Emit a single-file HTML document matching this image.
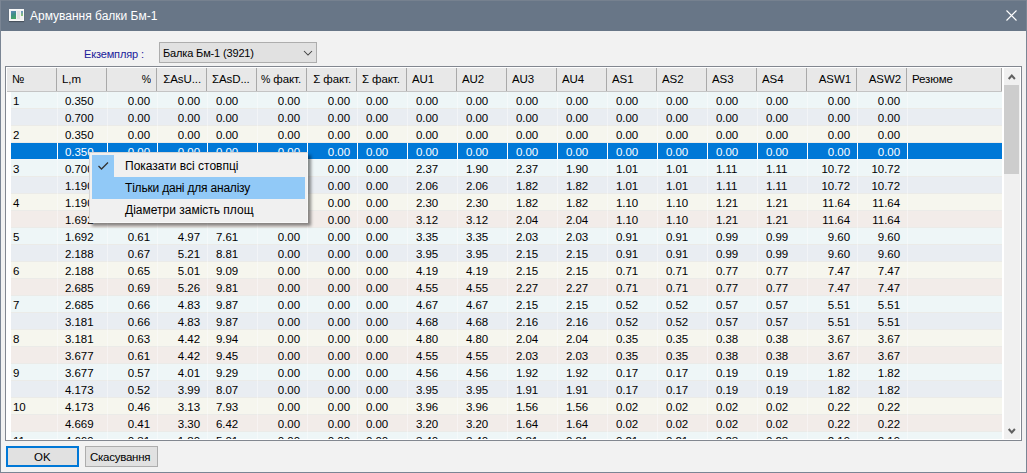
<!DOCTYPE html><html><head><meta charset="utf-8"><style>
*{margin:0;padding:0;box-sizing:border-box}
html,body{width:1027px;height:473px;overflow:hidden;background:#f2f2f2;font-family:"Liberation Sans", sans-serif;}
.a{position:absolute}
.t{position:absolute;white-space:nowrap;font-size:12px;line-height:16px;color:#000}
.d{letter-spacing:-0.05px;font-size:11.5px}.pc{display:inline-block;font-size:10.5px;transform:scaleY(1.12);transform-origin:50% 80%}.h{letter-spacing:-0.1px;font-size:11.5px}
.r{text-align:right}
</style></head><body>
<div class="a" style="left:0;top:0;width:1027px;height:473px;background:#f2f2f2;border:1px solid #717d8d;border-top:none"></div>
<div class="a" style="left:0;top:0;width:1027px;height:31px;background:#687687"></div>
<div class="a" style="left:0;top:0;width:1027px;height:1px;background:#76818f"></div>
<div class="a" style="left:0;top:0;width:1px;height:473px;background:#7a8594"></div>
<div class="a" style="left:1026px;top:0;width:1px;height:473px;background:#7a8594"></div>
<div class="a" style="left:0;top:472px;width:1027px;height:1px;background:#7a8594"></div>
<div class="a" style="left:9px;top:9px;width:15px;height:12px;background:#f2f2f2;border:1px solid #fafafa;box-shadow:0 1px 1px rgba(0,0,0,.3)"></div>
<div class="a" style="left:11px;top:11px;width:5px;height:8px;background:linear-gradient(160deg,#6088bb,#3f8f86 45%,#45a95a)"></div>
<div class="a" style="left:17px;top:11px;width:3px;height:8px;background:#e2e2e2"></div>
<div class="a" style="left:21px;top:11px;width:2px;height:5px;background:linear-gradient(#6a94c8,#8cc870)"></div>
<div class="t" style="left:30px;top:8px;color:#fff;font-size:12px">Армування балки Бм-1</div>
<svg class="a" style="left:1001px;top:5px" width="20" height="20" viewBox="0 0 20 20"><path d="M5.5 5.5L15.5 15.5M15.5 5.5L5.5 15.5" stroke="#fff" stroke-width="1.1"/></svg>
<div class="t" style="left:84px;top:46px;color:#20209a;font-size:11px;letter-spacing:-0.15px">Екземпляр :</div>
<div class="a" style="left:159px;top:42px;width:158px;height:21px;background:#e1e1e1;border:1px solid #adadad"></div>
<div class="t" style="left:163px;top:45px;font-size:11px;letter-spacing:-0.15px">Балка Бм-1 (3921)</div>
<svg class="a" style="left:302px;top:48px" width="12" height="10" viewBox="0 0 12 10"><path d="M2 3L6 7L10 3" fill="none" stroke="#404040" stroke-width="1.05"/></svg>
<div class="a" style="left:5px;top:66px;width:1017px;height:375px;background:#fff;border:1px solid #828790"></div>
<div class="a" style="left:7px;top:68px;width:995px;height:23px;background:#e8e8e8"></div>
<div class="a" style="left:7px;top:91px;width:995px;height:1px;background:#c4c4c4"></div>
<div class="a" style="left:56px;top:68px;width:1px;height:23px;background:#a9a9a9"></div>
<div class="t h" style="left:12px;top:71px">№</div>
<div class="a" style="left:106px;top:68px;width:1px;height:23px;background:#a9a9a9"></div>
<div class="t h" style="left:62px;top:71px">L,m</div>
<div class="a" style="left:156px;top:68px;width:1px;height:23px;background:#a9a9a9"></div>
<div class="t r h" style="left:106px;top:71px;width:45px"><span class="pc">%</span></div>
<div class="a" style="left:206px;top:68px;width:1px;height:23px;background:#a9a9a9"></div>
<div class="t r h" style="left:156px;top:71px;width:45px">ΣAsU...</div>
<div class="a" style="left:256px;top:68px;width:1px;height:23px;background:#a9a9a9"></div>
<div class="t h" style="left:212px;top:71px">ΣAsD...</div>
<div class="a" style="left:306px;top:68px;width:1px;height:23px;background:#a9a9a9"></div>
<div class="t r h" style="left:256px;top:71px;width:45px"><span class="pc">%</span> факт.</div>
<div class="a" style="left:356px;top:68px;width:1px;height:23px;background:#a9a9a9"></div>
<div class="t r h" style="left:306px;top:71px;width:45px">Σ факт.</div>
<div class="a" style="left:406px;top:68px;width:1px;height:23px;background:#a9a9a9"></div>
<div class="t h" style="left:362px;top:71px">Σ факт.</div>
<div class="a" style="left:456px;top:68px;width:1px;height:23px;background:#a9a9a9"></div>
<div class="t h" style="left:412px;top:71px">AU1</div>
<div class="a" style="left:506px;top:68px;width:1px;height:23px;background:#a9a9a9"></div>
<div class="t h" style="left:462px;top:71px">AU2</div>
<div class="a" style="left:556px;top:68px;width:1px;height:23px;background:#a9a9a9"></div>
<div class="t h" style="left:512px;top:71px">AU3</div>
<div class="a" style="left:606px;top:68px;width:1px;height:23px;background:#a9a9a9"></div>
<div class="t h" style="left:562px;top:71px">AU4</div>
<div class="a" style="left:656px;top:68px;width:1px;height:23px;background:#a9a9a9"></div>
<div class="t h" style="left:612px;top:71px">AS1</div>
<div class="a" style="left:706px;top:68px;width:1px;height:23px;background:#a9a9a9"></div>
<div class="t h" style="left:662px;top:71px">AS2</div>
<div class="a" style="left:756px;top:68px;width:1px;height:23px;background:#a9a9a9"></div>
<div class="t h" style="left:712px;top:71px">AS3</div>
<div class="a" style="left:806px;top:68px;width:1px;height:23px;background:#a9a9a9"></div>
<div class="t h" style="left:762px;top:71px">AS4</div>
<div class="a" style="left:856px;top:68px;width:1px;height:23px;background:#a9a9a9"></div>
<div class="t r h" style="left:806px;top:71px;width:45px">ASW1</div>
<div class="a" style="left:906px;top:68px;width:1px;height:23px;background:#a9a9a9"></div>
<div class="t r h" style="left:856px;top:71px;width:45px">ASW2</div>
<div class="t h" style="left:912px;top:71px">Резюме</div>
<div class="a" style="left:1001px;top:68px;width:1px;height:23px;background:#a9a9a9"></div>
<div class="a" style="left:7px;top:92px;width:997px;height:347px;overflow:hidden;background:#fff">
<div class="a" style="left:4px;top:0px;width:991px;height:17px;background:#eef6f7"></div>
<div class="a" style="left:4px;top:16px;width:991px;height:1px;background:#ebebe8"></div>
<div class="a" style="left:4px;top:17px;width:991px;height:17px;background:#e9edf2"></div>
<div class="a" style="left:4px;top:33px;width:991px;height:1px;background:#ebebe8"></div>
<div class="a" style="left:4px;top:34px;width:991px;height:17px;background:#f6f6ee"></div>
<div class="a" style="left:4px;top:50px;width:991px;height:1px;background:#ebebe8"></div>
<div class="a" style="left:4px;top:51px;width:991px;height:17px;background:#0078d7"></div>
<div class="a" style="left:4px;top:67px;width:991px;height:1px;background:#f4f6f8"></div>
<div class="a" style="left:4px;top:68px;width:991px;height:17px;background:#eef6f7"></div>
<div class="a" style="left:4px;top:84px;width:991px;height:1px;background:#ebebe8"></div>
<div class="a" style="left:4px;top:85px;width:991px;height:17px;background:#e9edf2"></div>
<div class="a" style="left:4px;top:101px;width:991px;height:1px;background:#ebebe8"></div>
<div class="a" style="left:4px;top:102px;width:991px;height:17px;background:#f6f6ee"></div>
<div class="a" style="left:4px;top:118px;width:991px;height:1px;background:#ebebe8"></div>
<div class="a" style="left:4px;top:119px;width:991px;height:17px;background:#f2ece9"></div>
<div class="a" style="left:4px;top:135px;width:991px;height:1px;background:#ebebe8"></div>
<div class="a" style="left:4px;top:136px;width:991px;height:17px;background:#eef6f7"></div>
<div class="a" style="left:4px;top:152px;width:991px;height:1px;background:#ebebe8"></div>
<div class="a" style="left:4px;top:153px;width:991px;height:17px;background:#e9edf2"></div>
<div class="a" style="left:4px;top:169px;width:991px;height:1px;background:#ebebe8"></div>
<div class="a" style="left:4px;top:170px;width:991px;height:17px;background:#f6f6ee"></div>
<div class="a" style="left:4px;top:186px;width:991px;height:1px;background:#ebebe8"></div>
<div class="a" style="left:4px;top:187px;width:991px;height:17px;background:#f2ece9"></div>
<div class="a" style="left:4px;top:203px;width:991px;height:1px;background:#ebebe8"></div>
<div class="a" style="left:4px;top:204px;width:991px;height:17px;background:#eef6f7"></div>
<div class="a" style="left:4px;top:220px;width:991px;height:1px;background:#ebebe8"></div>
<div class="a" style="left:4px;top:221px;width:991px;height:17px;background:#e9edf2"></div>
<div class="a" style="left:4px;top:237px;width:991px;height:1px;background:#ebebe8"></div>
<div class="a" style="left:4px;top:238px;width:991px;height:17px;background:#f6f6ee"></div>
<div class="a" style="left:4px;top:254px;width:991px;height:1px;background:#ebebe8"></div>
<div class="a" style="left:4px;top:255px;width:991px;height:17px;background:#f2ece9"></div>
<div class="a" style="left:4px;top:271px;width:991px;height:1px;background:#ebebe8"></div>
<div class="a" style="left:4px;top:272px;width:991px;height:17px;background:#eef6f7"></div>
<div class="a" style="left:4px;top:288px;width:991px;height:1px;background:#ebebe8"></div>
<div class="a" style="left:4px;top:289px;width:991px;height:17px;background:#e9edf2"></div>
<div class="a" style="left:4px;top:305px;width:991px;height:1px;background:#ebebe8"></div>
<div class="a" style="left:4px;top:306px;width:991px;height:17px;background:#f6f6ee"></div>
<div class="a" style="left:4px;top:322px;width:991px;height:1px;background:#ebebe8"></div>
<div class="a" style="left:4px;top:323px;width:991px;height:17px;background:#f2ece9"></div>
<div class="a" style="left:4px;top:339px;width:991px;height:1px;background:#ebebe8"></div>
<div class="a" style="left:4px;top:340px;width:991px;height:17px;background:#eef6f7"></div>
<div class="a" style="left:4px;top:356px;width:991px;height:1px;background:#ebebe8"></div>
<div class="a" style="left:50px;top:0;width:1px;height:347px;background:rgba(255,255,255,.4)"></div>
<div class="a" style="left:100px;top:0;width:1px;height:347px;background:rgba(255,255,255,.4)"></div>
<div class="a" style="left:150px;top:0;width:1px;height:347px;background:rgba(255,255,255,.4)"></div>
<div class="a" style="left:200px;top:0;width:1px;height:347px;background:rgba(255,255,255,.4)"></div>
<div class="a" style="left:250px;top:0;width:1px;height:347px;background:rgba(255,255,255,.4)"></div>
<div class="a" style="left:300px;top:0;width:1px;height:347px;background:rgba(255,255,255,.4)"></div>
<div class="a" style="left:350px;top:0;width:1px;height:347px;background:rgba(255,255,255,.4)"></div>
<div class="a" style="left:400px;top:0;width:1px;height:347px;background:rgba(255,255,255,.4)"></div>
<div class="a" style="left:450px;top:0;width:1px;height:347px;background:rgba(255,255,255,.4)"></div>
<div class="a" style="left:500px;top:0;width:1px;height:347px;background:rgba(255,255,255,.4)"></div>
<div class="a" style="left:550px;top:0;width:1px;height:347px;background:rgba(255,255,255,.4)"></div>
<div class="a" style="left:600px;top:0;width:1px;height:347px;background:rgba(255,255,255,.4)"></div>
<div class="a" style="left:650px;top:0;width:1px;height:347px;background:rgba(255,255,255,.4)"></div>
<div class="a" style="left:700px;top:0;width:1px;height:347px;background:rgba(255,255,255,.4)"></div>
<div class="a" style="left:750px;top:0;width:1px;height:347px;background:rgba(255,255,255,.4)"></div>
<div class="a" style="left:800px;top:0;width:1px;height:347px;background:rgba(255,255,255,.4)"></div>
<div class="a" style="left:850px;top:0;width:1px;height:347px;background:rgba(255,255,255,.4)"></div>
<div class="a" style="left:900px;top:0;width:1px;height:347px;background:rgba(255,255,255,.4)"></div>
<div class="a" style="left:50px;top:51px;width:1px;height:16px;background:#fff"></div>
<div class="a" style="left:100px;top:51px;width:1px;height:16px;background:#fff"></div>
<div class="a" style="left:150px;top:51px;width:1px;height:16px;background:#fff"></div>
<div class="a" style="left:200px;top:51px;width:1px;height:16px;background:#fff"></div>
<div class="a" style="left:250px;top:51px;width:1px;height:16px;background:#fff"></div>
<div class="a" style="left:300px;top:51px;width:1px;height:16px;background:#fff"></div>
<div class="a" style="left:350px;top:51px;width:1px;height:16px;background:#fff"></div>
<div class="a" style="left:400px;top:51px;width:1px;height:16px;background:#fff"></div>
<div class="a" style="left:450px;top:51px;width:1px;height:16px;background:#fff"></div>
<div class="a" style="left:500px;top:51px;width:1px;height:16px;background:#fff"></div>
<div class="a" style="left:550px;top:51px;width:1px;height:16px;background:#fff"></div>
<div class="a" style="left:600px;top:51px;width:1px;height:16px;background:#fff"></div>
<div class="a" style="left:650px;top:51px;width:1px;height:16px;background:#fff"></div>
<div class="a" style="left:700px;top:51px;width:1px;height:16px;background:#fff"></div>
<div class="a" style="left:750px;top:51px;width:1px;height:16px;background:#fff"></div>
<div class="a" style="left:800px;top:51px;width:1px;height:16px;background:#fff"></div>
<div class="a" style="left:850px;top:51px;width:1px;height:16px;background:#fff"></div>
<div class="a" style="left:900px;top:51px;width:1px;height:16px;background:#fff"></div>
<div class="t d" style="left:6px;top:1px;color:#000">1</div>
<div class="t d" style="left:58px;top:1px;color:#000">0.350</div>
<div class="t r d" style="left:99px;top:1px;width:44px;color:#000">0.00</div>
<div class="t r d" style="left:149px;top:1px;width:44px;color:#000">0.00</div>
<div class="t d" style="left:209px;top:1px;color:#000">0.00</div>
<div class="t r d" style="left:249px;top:1px;width:44px;color:#000">0.00</div>
<div class="t r d" style="left:299px;top:1px;width:44px;color:#000">0.00</div>
<div class="t d" style="left:359px;top:1px;color:#000">0.00</div>
<div class="t d" style="left:409px;top:1px;color:#000">0.00</div>
<div class="t d" style="left:459px;top:1px;color:#000">0.00</div>
<div class="t d" style="left:509px;top:1px;color:#000">0.00</div>
<div class="t d" style="left:559px;top:1px;color:#000">0.00</div>
<div class="t d" style="left:609px;top:1px;color:#000">0.00</div>
<div class="t d" style="left:659px;top:1px;color:#000">0.00</div>
<div class="t d" style="left:709px;top:1px;color:#000">0.00</div>
<div class="t d" style="left:759px;top:1px;color:#000">0.00</div>
<div class="t r d" style="left:799px;top:1px;width:44px;color:#000">0.00</div>
<div class="t r d" style="left:849px;top:1px;width:44px;color:#000">0.00</div>
<div class="t d" style="left:58px;top:18px;color:#000">0.700</div>
<div class="t r d" style="left:99px;top:18px;width:44px;color:#000">0.00</div>
<div class="t r d" style="left:149px;top:18px;width:44px;color:#000">0.00</div>
<div class="t d" style="left:209px;top:18px;color:#000">0.00</div>
<div class="t r d" style="left:249px;top:18px;width:44px;color:#000">0.00</div>
<div class="t r d" style="left:299px;top:18px;width:44px;color:#000">0.00</div>
<div class="t d" style="left:359px;top:18px;color:#000">0.00</div>
<div class="t d" style="left:409px;top:18px;color:#000">0.00</div>
<div class="t d" style="left:459px;top:18px;color:#000">0.00</div>
<div class="t d" style="left:509px;top:18px;color:#000">0.00</div>
<div class="t d" style="left:559px;top:18px;color:#000">0.00</div>
<div class="t d" style="left:609px;top:18px;color:#000">0.00</div>
<div class="t d" style="left:659px;top:18px;color:#000">0.00</div>
<div class="t d" style="left:709px;top:18px;color:#000">0.00</div>
<div class="t d" style="left:759px;top:18px;color:#000">0.00</div>
<div class="t r d" style="left:799px;top:18px;width:44px;color:#000">0.00</div>
<div class="t r d" style="left:849px;top:18px;width:44px;color:#000">0.00</div>
<div class="t d" style="left:6px;top:35px;color:#000">2</div>
<div class="t d" style="left:58px;top:35px;color:#000">0.350</div>
<div class="t r d" style="left:99px;top:35px;width:44px;color:#000">0.00</div>
<div class="t r d" style="left:149px;top:35px;width:44px;color:#000">0.00</div>
<div class="t d" style="left:209px;top:35px;color:#000">0.00</div>
<div class="t r d" style="left:249px;top:35px;width:44px;color:#000">0.00</div>
<div class="t r d" style="left:299px;top:35px;width:44px;color:#000">0.00</div>
<div class="t d" style="left:359px;top:35px;color:#000">0.00</div>
<div class="t d" style="left:409px;top:35px;color:#000">0.00</div>
<div class="t d" style="left:459px;top:35px;color:#000">0.00</div>
<div class="t d" style="left:509px;top:35px;color:#000">0.00</div>
<div class="t d" style="left:559px;top:35px;color:#000">0.00</div>
<div class="t d" style="left:609px;top:35px;color:#000">0.00</div>
<div class="t d" style="left:659px;top:35px;color:#000">0.00</div>
<div class="t d" style="left:709px;top:35px;color:#000">0.00</div>
<div class="t d" style="left:759px;top:35px;color:#000">0.00</div>
<div class="t r d" style="left:799px;top:35px;width:44px;color:#000">0.00</div>
<div class="t r d" style="left:849px;top:35px;width:44px;color:#000">0.00</div>
<div class="t d" style="left:58px;top:52px;color:#fff">0.350</div>
<div class="t r d" style="left:99px;top:52px;width:44px;color:#fff">0.00</div>
<div class="t r d" style="left:149px;top:52px;width:44px;color:#fff">0.00</div>
<div class="t d" style="left:209px;top:52px;color:#fff">0.00</div>
<div class="t r d" style="left:249px;top:52px;width:44px;color:#fff">0.00</div>
<div class="t r d" style="left:299px;top:52px;width:44px;color:#fff">0.00</div>
<div class="t d" style="left:359px;top:52px;color:#fff">0.00</div>
<div class="t d" style="left:409px;top:52px;color:#fff">0.00</div>
<div class="t d" style="left:459px;top:52px;color:#fff">0.00</div>
<div class="t d" style="left:509px;top:52px;color:#fff">0.00</div>
<div class="t d" style="left:559px;top:52px;color:#fff">0.00</div>
<div class="t d" style="left:609px;top:52px;color:#fff">0.00</div>
<div class="t d" style="left:659px;top:52px;color:#fff">0.00</div>
<div class="t d" style="left:709px;top:52px;color:#fff">0.00</div>
<div class="t d" style="left:759px;top:52px;color:#fff">0.00</div>
<div class="t r d" style="left:799px;top:52px;width:44px;color:#fff">0.00</div>
<div class="t r d" style="left:849px;top:52px;width:44px;color:#fff">0.00</div>
<div class="t d" style="left:6px;top:69px;color:#000">3</div>
<div class="t d" style="left:58px;top:69px;color:#000">0.700</div>
<div class="t r d" style="left:299px;top:69px;width:44px;color:#000">0.00</div>
<div class="t d" style="left:359px;top:69px;color:#000">0.00</div>
<div class="t d" style="left:409px;top:69px;color:#000">2.37</div>
<div class="t d" style="left:459px;top:69px;color:#000">1.90</div>
<div class="t d" style="left:509px;top:69px;color:#000">2.37</div>
<div class="t d" style="left:559px;top:69px;color:#000">1.90</div>
<div class="t d" style="left:609px;top:69px;color:#000">1.01</div>
<div class="t d" style="left:659px;top:69px;color:#000">1.01</div>
<div class="t d" style="left:709px;top:69px;color:#000">1.11</div>
<div class="t d" style="left:759px;top:69px;color:#000">1.11</div>
<div class="t r d" style="left:799px;top:69px;width:44px;color:#000">10.72</div>
<div class="t r d" style="left:849px;top:69px;width:44px;color:#000">10.72</div>
<div class="t d" style="left:58px;top:86px;color:#000">1.190</div>
<div class="t r d" style="left:299px;top:86px;width:44px;color:#000">0.00</div>
<div class="t d" style="left:359px;top:86px;color:#000">0.00</div>
<div class="t d" style="left:409px;top:86px;color:#000">2.06</div>
<div class="t d" style="left:459px;top:86px;color:#000">2.06</div>
<div class="t d" style="left:509px;top:86px;color:#000">1.82</div>
<div class="t d" style="left:559px;top:86px;color:#000">1.82</div>
<div class="t d" style="left:609px;top:86px;color:#000">1.01</div>
<div class="t d" style="left:659px;top:86px;color:#000">1.01</div>
<div class="t d" style="left:709px;top:86px;color:#000">1.11</div>
<div class="t d" style="left:759px;top:86px;color:#000">1.11</div>
<div class="t r d" style="left:799px;top:86px;width:44px;color:#000">10.72</div>
<div class="t r d" style="left:849px;top:86px;width:44px;color:#000">10.72</div>
<div class="t d" style="left:6px;top:103px;color:#000">4</div>
<div class="t d" style="left:58px;top:103px;color:#000">1.190</div>
<div class="t r d" style="left:299px;top:103px;width:44px;color:#000">0.00</div>
<div class="t d" style="left:359px;top:103px;color:#000">0.00</div>
<div class="t d" style="left:409px;top:103px;color:#000">2.30</div>
<div class="t d" style="left:459px;top:103px;color:#000">2.30</div>
<div class="t d" style="left:509px;top:103px;color:#000">1.82</div>
<div class="t d" style="left:559px;top:103px;color:#000">1.82</div>
<div class="t d" style="left:609px;top:103px;color:#000">1.10</div>
<div class="t d" style="left:659px;top:103px;color:#000">1.10</div>
<div class="t d" style="left:709px;top:103px;color:#000">1.21</div>
<div class="t d" style="left:759px;top:103px;color:#000">1.21</div>
<div class="t r d" style="left:799px;top:103px;width:44px;color:#000">11.64</div>
<div class="t r d" style="left:849px;top:103px;width:44px;color:#000">11.64</div>
<div class="t d" style="left:58px;top:120px;color:#000">1.692</div>
<div class="t r d" style="left:299px;top:120px;width:44px;color:#000">0.00</div>
<div class="t d" style="left:359px;top:120px;color:#000">0.00</div>
<div class="t d" style="left:409px;top:120px;color:#000">3.12</div>
<div class="t d" style="left:459px;top:120px;color:#000">3.12</div>
<div class="t d" style="left:509px;top:120px;color:#000">2.04</div>
<div class="t d" style="left:559px;top:120px;color:#000">2.04</div>
<div class="t d" style="left:609px;top:120px;color:#000">1.10</div>
<div class="t d" style="left:659px;top:120px;color:#000">1.10</div>
<div class="t d" style="left:709px;top:120px;color:#000">1.21</div>
<div class="t d" style="left:759px;top:120px;color:#000">1.21</div>
<div class="t r d" style="left:799px;top:120px;width:44px;color:#000">11.64</div>
<div class="t r d" style="left:849px;top:120px;width:44px;color:#000">11.64</div>
<div class="t d" style="left:6px;top:137px;color:#000">5</div>
<div class="t d" style="left:58px;top:137px;color:#000">1.692</div>
<div class="t r d" style="left:99px;top:137px;width:44px;color:#000">0.61</div>
<div class="t r d" style="left:149px;top:137px;width:44px;color:#000">4.97</div>
<div class="t d" style="left:209px;top:137px;color:#000">7.61</div>
<div class="t r d" style="left:249px;top:137px;width:44px;color:#000">0.00</div>
<div class="t r d" style="left:299px;top:137px;width:44px;color:#000">0.00</div>
<div class="t d" style="left:359px;top:137px;color:#000">0.00</div>
<div class="t d" style="left:409px;top:137px;color:#000">3.35</div>
<div class="t d" style="left:459px;top:137px;color:#000">3.35</div>
<div class="t d" style="left:509px;top:137px;color:#000">2.03</div>
<div class="t d" style="left:559px;top:137px;color:#000">2.03</div>
<div class="t d" style="left:609px;top:137px;color:#000">0.91</div>
<div class="t d" style="left:659px;top:137px;color:#000">0.91</div>
<div class="t d" style="left:709px;top:137px;color:#000">0.99</div>
<div class="t d" style="left:759px;top:137px;color:#000">0.99</div>
<div class="t r d" style="left:799px;top:137px;width:44px;color:#000">9.60</div>
<div class="t r d" style="left:849px;top:137px;width:44px;color:#000">9.60</div>
<div class="t d" style="left:58px;top:154px;color:#000">2.188</div>
<div class="t r d" style="left:99px;top:154px;width:44px;color:#000">0.67</div>
<div class="t r d" style="left:149px;top:154px;width:44px;color:#000">5.21</div>
<div class="t d" style="left:209px;top:154px;color:#000">8.81</div>
<div class="t r d" style="left:249px;top:154px;width:44px;color:#000">0.00</div>
<div class="t r d" style="left:299px;top:154px;width:44px;color:#000">0.00</div>
<div class="t d" style="left:359px;top:154px;color:#000">0.00</div>
<div class="t d" style="left:409px;top:154px;color:#000">3.95</div>
<div class="t d" style="left:459px;top:154px;color:#000">3.95</div>
<div class="t d" style="left:509px;top:154px;color:#000">2.15</div>
<div class="t d" style="left:559px;top:154px;color:#000">2.15</div>
<div class="t d" style="left:609px;top:154px;color:#000">0.91</div>
<div class="t d" style="left:659px;top:154px;color:#000">0.91</div>
<div class="t d" style="left:709px;top:154px;color:#000">0.99</div>
<div class="t d" style="left:759px;top:154px;color:#000">0.99</div>
<div class="t r d" style="left:799px;top:154px;width:44px;color:#000">9.60</div>
<div class="t r d" style="left:849px;top:154px;width:44px;color:#000">9.60</div>
<div class="t d" style="left:6px;top:171px;color:#000">6</div>
<div class="t d" style="left:58px;top:171px;color:#000">2.188</div>
<div class="t r d" style="left:99px;top:171px;width:44px;color:#000">0.65</div>
<div class="t r d" style="left:149px;top:171px;width:44px;color:#000">5.01</div>
<div class="t d" style="left:209px;top:171px;color:#000">9.09</div>
<div class="t r d" style="left:249px;top:171px;width:44px;color:#000">0.00</div>
<div class="t r d" style="left:299px;top:171px;width:44px;color:#000">0.00</div>
<div class="t d" style="left:359px;top:171px;color:#000">0.00</div>
<div class="t d" style="left:409px;top:171px;color:#000">4.19</div>
<div class="t d" style="left:459px;top:171px;color:#000">4.19</div>
<div class="t d" style="left:509px;top:171px;color:#000">2.15</div>
<div class="t d" style="left:559px;top:171px;color:#000">2.15</div>
<div class="t d" style="left:609px;top:171px;color:#000">0.71</div>
<div class="t d" style="left:659px;top:171px;color:#000">0.71</div>
<div class="t d" style="left:709px;top:171px;color:#000">0.77</div>
<div class="t d" style="left:759px;top:171px;color:#000">0.77</div>
<div class="t r d" style="left:799px;top:171px;width:44px;color:#000">7.47</div>
<div class="t r d" style="left:849px;top:171px;width:44px;color:#000">7.47</div>
<div class="t d" style="left:58px;top:188px;color:#000">2.685</div>
<div class="t r d" style="left:99px;top:188px;width:44px;color:#000">0.69</div>
<div class="t r d" style="left:149px;top:188px;width:44px;color:#000">5.26</div>
<div class="t d" style="left:209px;top:188px;color:#000">9.81</div>
<div class="t r d" style="left:249px;top:188px;width:44px;color:#000">0.00</div>
<div class="t r d" style="left:299px;top:188px;width:44px;color:#000">0.00</div>
<div class="t d" style="left:359px;top:188px;color:#000">0.00</div>
<div class="t d" style="left:409px;top:188px;color:#000">4.55</div>
<div class="t d" style="left:459px;top:188px;color:#000">4.55</div>
<div class="t d" style="left:509px;top:188px;color:#000">2.27</div>
<div class="t d" style="left:559px;top:188px;color:#000">2.27</div>
<div class="t d" style="left:609px;top:188px;color:#000">0.71</div>
<div class="t d" style="left:659px;top:188px;color:#000">0.71</div>
<div class="t d" style="left:709px;top:188px;color:#000">0.77</div>
<div class="t d" style="left:759px;top:188px;color:#000">0.77</div>
<div class="t r d" style="left:799px;top:188px;width:44px;color:#000">7.47</div>
<div class="t r d" style="left:849px;top:188px;width:44px;color:#000">7.47</div>
<div class="t d" style="left:6px;top:205px;color:#000">7</div>
<div class="t d" style="left:58px;top:205px;color:#000">2.685</div>
<div class="t r d" style="left:99px;top:205px;width:44px;color:#000">0.66</div>
<div class="t r d" style="left:149px;top:205px;width:44px;color:#000">4.83</div>
<div class="t d" style="left:209px;top:205px;color:#000">9.87</div>
<div class="t r d" style="left:249px;top:205px;width:44px;color:#000">0.00</div>
<div class="t r d" style="left:299px;top:205px;width:44px;color:#000">0.00</div>
<div class="t d" style="left:359px;top:205px;color:#000">0.00</div>
<div class="t d" style="left:409px;top:205px;color:#000">4.67</div>
<div class="t d" style="left:459px;top:205px;color:#000">4.67</div>
<div class="t d" style="left:509px;top:205px;color:#000">2.15</div>
<div class="t d" style="left:559px;top:205px;color:#000">2.15</div>
<div class="t d" style="left:609px;top:205px;color:#000">0.52</div>
<div class="t d" style="left:659px;top:205px;color:#000">0.52</div>
<div class="t d" style="left:709px;top:205px;color:#000">0.57</div>
<div class="t d" style="left:759px;top:205px;color:#000">0.57</div>
<div class="t r d" style="left:799px;top:205px;width:44px;color:#000">5.51</div>
<div class="t r d" style="left:849px;top:205px;width:44px;color:#000">5.51</div>
<div class="t d" style="left:58px;top:222px;color:#000">3.181</div>
<div class="t r d" style="left:99px;top:222px;width:44px;color:#000">0.66</div>
<div class="t r d" style="left:149px;top:222px;width:44px;color:#000">4.83</div>
<div class="t d" style="left:209px;top:222px;color:#000">9.87</div>
<div class="t r d" style="left:249px;top:222px;width:44px;color:#000">0.00</div>
<div class="t r d" style="left:299px;top:222px;width:44px;color:#000">0.00</div>
<div class="t d" style="left:359px;top:222px;color:#000">0.00</div>
<div class="t d" style="left:409px;top:222px;color:#000">4.68</div>
<div class="t d" style="left:459px;top:222px;color:#000">4.68</div>
<div class="t d" style="left:509px;top:222px;color:#000">2.16</div>
<div class="t d" style="left:559px;top:222px;color:#000">2.16</div>
<div class="t d" style="left:609px;top:222px;color:#000">0.52</div>
<div class="t d" style="left:659px;top:222px;color:#000">0.52</div>
<div class="t d" style="left:709px;top:222px;color:#000">0.57</div>
<div class="t d" style="left:759px;top:222px;color:#000">0.57</div>
<div class="t r d" style="left:799px;top:222px;width:44px;color:#000">5.51</div>
<div class="t r d" style="left:849px;top:222px;width:44px;color:#000">5.51</div>
<div class="t d" style="left:6px;top:239px;color:#000">8</div>
<div class="t d" style="left:58px;top:239px;color:#000">3.181</div>
<div class="t r d" style="left:99px;top:239px;width:44px;color:#000">0.63</div>
<div class="t r d" style="left:149px;top:239px;width:44px;color:#000">4.42</div>
<div class="t d" style="left:209px;top:239px;color:#000">9.94</div>
<div class="t r d" style="left:249px;top:239px;width:44px;color:#000">0.00</div>
<div class="t r d" style="left:299px;top:239px;width:44px;color:#000">0.00</div>
<div class="t d" style="left:359px;top:239px;color:#000">0.00</div>
<div class="t d" style="left:409px;top:239px;color:#000">4.80</div>
<div class="t d" style="left:459px;top:239px;color:#000">4.80</div>
<div class="t d" style="left:509px;top:239px;color:#000">2.04</div>
<div class="t d" style="left:559px;top:239px;color:#000">2.04</div>
<div class="t d" style="left:609px;top:239px;color:#000">0.35</div>
<div class="t d" style="left:659px;top:239px;color:#000">0.35</div>
<div class="t d" style="left:709px;top:239px;color:#000">0.38</div>
<div class="t d" style="left:759px;top:239px;color:#000">0.38</div>
<div class="t r d" style="left:799px;top:239px;width:44px;color:#000">3.67</div>
<div class="t r d" style="left:849px;top:239px;width:44px;color:#000">3.67</div>
<div class="t d" style="left:58px;top:256px;color:#000">3.677</div>
<div class="t r d" style="left:99px;top:256px;width:44px;color:#000">0.61</div>
<div class="t r d" style="left:149px;top:256px;width:44px;color:#000">4.42</div>
<div class="t d" style="left:209px;top:256px;color:#000">9.45</div>
<div class="t r d" style="left:249px;top:256px;width:44px;color:#000">0.00</div>
<div class="t r d" style="left:299px;top:256px;width:44px;color:#000">0.00</div>
<div class="t d" style="left:359px;top:256px;color:#000">0.00</div>
<div class="t d" style="left:409px;top:256px;color:#000">4.55</div>
<div class="t d" style="left:459px;top:256px;color:#000">4.55</div>
<div class="t d" style="left:509px;top:256px;color:#000">2.03</div>
<div class="t d" style="left:559px;top:256px;color:#000">2.03</div>
<div class="t d" style="left:609px;top:256px;color:#000">0.35</div>
<div class="t d" style="left:659px;top:256px;color:#000">0.35</div>
<div class="t d" style="left:709px;top:256px;color:#000">0.38</div>
<div class="t d" style="left:759px;top:256px;color:#000">0.38</div>
<div class="t r d" style="left:799px;top:256px;width:44px;color:#000">3.67</div>
<div class="t r d" style="left:849px;top:256px;width:44px;color:#000">3.67</div>
<div class="t d" style="left:6px;top:273px;color:#000">9</div>
<div class="t d" style="left:58px;top:273px;color:#000">3.677</div>
<div class="t r d" style="left:99px;top:273px;width:44px;color:#000">0.57</div>
<div class="t r d" style="left:149px;top:273px;width:44px;color:#000">4.01</div>
<div class="t d" style="left:209px;top:273px;color:#000">9.29</div>
<div class="t r d" style="left:249px;top:273px;width:44px;color:#000">0.00</div>
<div class="t r d" style="left:299px;top:273px;width:44px;color:#000">0.00</div>
<div class="t d" style="left:359px;top:273px;color:#000">0.00</div>
<div class="t d" style="left:409px;top:273px;color:#000">4.56</div>
<div class="t d" style="left:459px;top:273px;color:#000">4.56</div>
<div class="t d" style="left:509px;top:273px;color:#000">1.92</div>
<div class="t d" style="left:559px;top:273px;color:#000">1.92</div>
<div class="t d" style="left:609px;top:273px;color:#000">0.17</div>
<div class="t d" style="left:659px;top:273px;color:#000">0.17</div>
<div class="t d" style="left:709px;top:273px;color:#000">0.19</div>
<div class="t d" style="left:759px;top:273px;color:#000">0.19</div>
<div class="t r d" style="left:799px;top:273px;width:44px;color:#000">1.82</div>
<div class="t r d" style="left:849px;top:273px;width:44px;color:#000">1.82</div>
<div class="t d" style="left:58px;top:290px;color:#000">4.173</div>
<div class="t r d" style="left:99px;top:290px;width:44px;color:#000">0.52</div>
<div class="t r d" style="left:149px;top:290px;width:44px;color:#000">3.99</div>
<div class="t d" style="left:209px;top:290px;color:#000">8.07</div>
<div class="t r d" style="left:249px;top:290px;width:44px;color:#000">0.00</div>
<div class="t r d" style="left:299px;top:290px;width:44px;color:#000">0.00</div>
<div class="t d" style="left:359px;top:290px;color:#000">0.00</div>
<div class="t d" style="left:409px;top:290px;color:#000">3.95</div>
<div class="t d" style="left:459px;top:290px;color:#000">3.95</div>
<div class="t d" style="left:509px;top:290px;color:#000">1.91</div>
<div class="t d" style="left:559px;top:290px;color:#000">1.91</div>
<div class="t d" style="left:609px;top:290px;color:#000">0.17</div>
<div class="t d" style="left:659px;top:290px;color:#000">0.17</div>
<div class="t d" style="left:709px;top:290px;color:#000">0.19</div>
<div class="t d" style="left:759px;top:290px;color:#000">0.19</div>
<div class="t r d" style="left:799px;top:290px;width:44px;color:#000">1.82</div>
<div class="t r d" style="left:849px;top:290px;width:44px;color:#000">1.82</div>
<div class="t d" style="left:6px;top:307px;color:#000">10</div>
<div class="t d" style="left:58px;top:307px;color:#000">4.173</div>
<div class="t r d" style="left:99px;top:307px;width:44px;color:#000">0.46</div>
<div class="t r d" style="left:149px;top:307px;width:44px;color:#000">3.13</div>
<div class="t d" style="left:209px;top:307px;color:#000">7.93</div>
<div class="t r d" style="left:249px;top:307px;width:44px;color:#000">0.00</div>
<div class="t r d" style="left:299px;top:307px;width:44px;color:#000">0.00</div>
<div class="t d" style="left:359px;top:307px;color:#000">0.00</div>
<div class="t d" style="left:409px;top:307px;color:#000">3.96</div>
<div class="t d" style="left:459px;top:307px;color:#000">3.96</div>
<div class="t d" style="left:509px;top:307px;color:#000">1.56</div>
<div class="t d" style="left:559px;top:307px;color:#000">1.56</div>
<div class="t d" style="left:609px;top:307px;color:#000">0.02</div>
<div class="t d" style="left:659px;top:307px;color:#000">0.02</div>
<div class="t d" style="left:709px;top:307px;color:#000">0.02</div>
<div class="t d" style="left:759px;top:307px;color:#000">0.02</div>
<div class="t r d" style="left:799px;top:307px;width:44px;color:#000">0.22</div>
<div class="t r d" style="left:849px;top:307px;width:44px;color:#000">0.22</div>
<div class="t d" style="left:58px;top:324px;color:#000">4.669</div>
<div class="t r d" style="left:99px;top:324px;width:44px;color:#000">0.41</div>
<div class="t r d" style="left:149px;top:324px;width:44px;color:#000">3.30</div>
<div class="t d" style="left:209px;top:324px;color:#000">6.42</div>
<div class="t r d" style="left:249px;top:324px;width:44px;color:#000">0.00</div>
<div class="t r d" style="left:299px;top:324px;width:44px;color:#000">0.00</div>
<div class="t d" style="left:359px;top:324px;color:#000">0.00</div>
<div class="t d" style="left:409px;top:324px;color:#000">3.20</div>
<div class="t d" style="left:459px;top:324px;color:#000">3.20</div>
<div class="t d" style="left:509px;top:324px;color:#000">1.64</div>
<div class="t d" style="left:559px;top:324px;color:#000">1.64</div>
<div class="t d" style="left:609px;top:324px;color:#000">0.02</div>
<div class="t d" style="left:659px;top:324px;color:#000">0.02</div>
<div class="t d" style="left:709px;top:324px;color:#000">0.02</div>
<div class="t d" style="left:759px;top:324px;color:#000">0.02</div>
<div class="t r d" style="left:799px;top:324px;width:44px;color:#000">0.22</div>
<div class="t r d" style="left:849px;top:324px;width:44px;color:#000">0.22</div>
<div class="t d" style="left:6px;top:341px;color:#000">11</div>
<div class="t d" style="left:58px;top:341px;color:#000">4.669</div>
<div class="t r d" style="left:99px;top:341px;width:44px;color:#000">0.31</div>
<div class="t r d" style="left:149px;top:341px;width:44px;color:#000">1.80</div>
<div class="t d" style="left:209px;top:341px;color:#000">5.01</div>
<div class="t r d" style="left:249px;top:341px;width:44px;color:#000">0.00</div>
<div class="t r d" style="left:299px;top:341px;width:44px;color:#000">0.00</div>
<div class="t d" style="left:359px;top:341px;color:#000">0.00</div>
<div class="t d" style="left:409px;top:341px;color:#000">3.40</div>
<div class="t d" style="left:459px;top:341px;color:#000">3.40</div>
<div class="t d" style="left:509px;top:341px;color:#000">0.81</div>
<div class="t d" style="left:559px;top:341px;color:#000">0.81</div>
<div class="t d" style="left:609px;top:341px;color:#000">0.21</div>
<div class="t d" style="left:659px;top:341px;color:#000">0.21</div>
<div class="t d" style="left:709px;top:341px;color:#000">0.23</div>
<div class="t d" style="left:759px;top:341px;color:#000">0.23</div>
<div class="t r d" style="left:799px;top:341px;width:44px;color:#000">2.19</div>
<div class="t r d" style="left:849px;top:341px;width:44px;color:#000">2.19</div>
</div>
<div class="a" style="left:1004px;top:68px;width:16px;height:371px;background:#f0f0f0"></div>
<div class="a" style="left:1004px;top:85px;width:15px;height:89px;background:#cdcdcd"></div>
<svg class="a" style="left:1004px;top:68px" width="16" height="17" viewBox="0 0 16 17"><path d="M4.7 11L7.8 7.6L10.9 11" fill="none" stroke="#606060" stroke-width="2"/></svg>
<svg class="a" style="left:1004px;top:422px" width="16" height="17" viewBox="0 0 16 17"><path d="M4.7 7L7.8 10.4L10.9 7" fill="none" stroke="#606060" stroke-width="2"/></svg>
<div class="a" style="left:89px;top:152px;width:219px;height:71px;background:#f0f0f0;border:1px solid #d6d6d6;border-right-color:#f8f8f8;border-bottom-color:#f8f8f8;box-shadow:3px 3px 3px rgba(0,0,0,.45)"></div>
<div class="a" style="left:92px;top:155px;width:22px;height:22px;background:#91c9f7"></div>
<svg class="a" style="left:92px;top:155px" width="22" height="22" viewBox="0 0 22 22"><path d="M6.5 11L9.5 14L16 7.5" fill="none" stroke="#333" stroke-width="1.3"/></svg>
<div class="a" style="left:92px;top:177px;width:213px;height:22px;background:#91c9f7"></div>
<div class="t" style="left:125px;top:158px">Показати всі стовпці</div>
<div class="t" style="left:125px;top:180px;letter-spacing:-0.2px">Тільки дані для аналізу</div>
<div class="t" style="left:125px;top:202px">Діаметри замість площ</div>
<div class="a" style="left:6px;top:446px;width:73px;height:21px;background:#e1e1e1;border:2px solid #0078d7"></div>
<div class="t" style="left:34px;top:449px;font-size:11.5px">OK</div>
<div class="a" style="left:85px;top:446px;width:73px;height:21px;background:#e1e1e1;border:1px solid #adadad"></div>
<div class="t" style="left:90px;top:449px;font-size:11.5px;letter-spacing:-0.25px">Скасування</div>
</body></html>
